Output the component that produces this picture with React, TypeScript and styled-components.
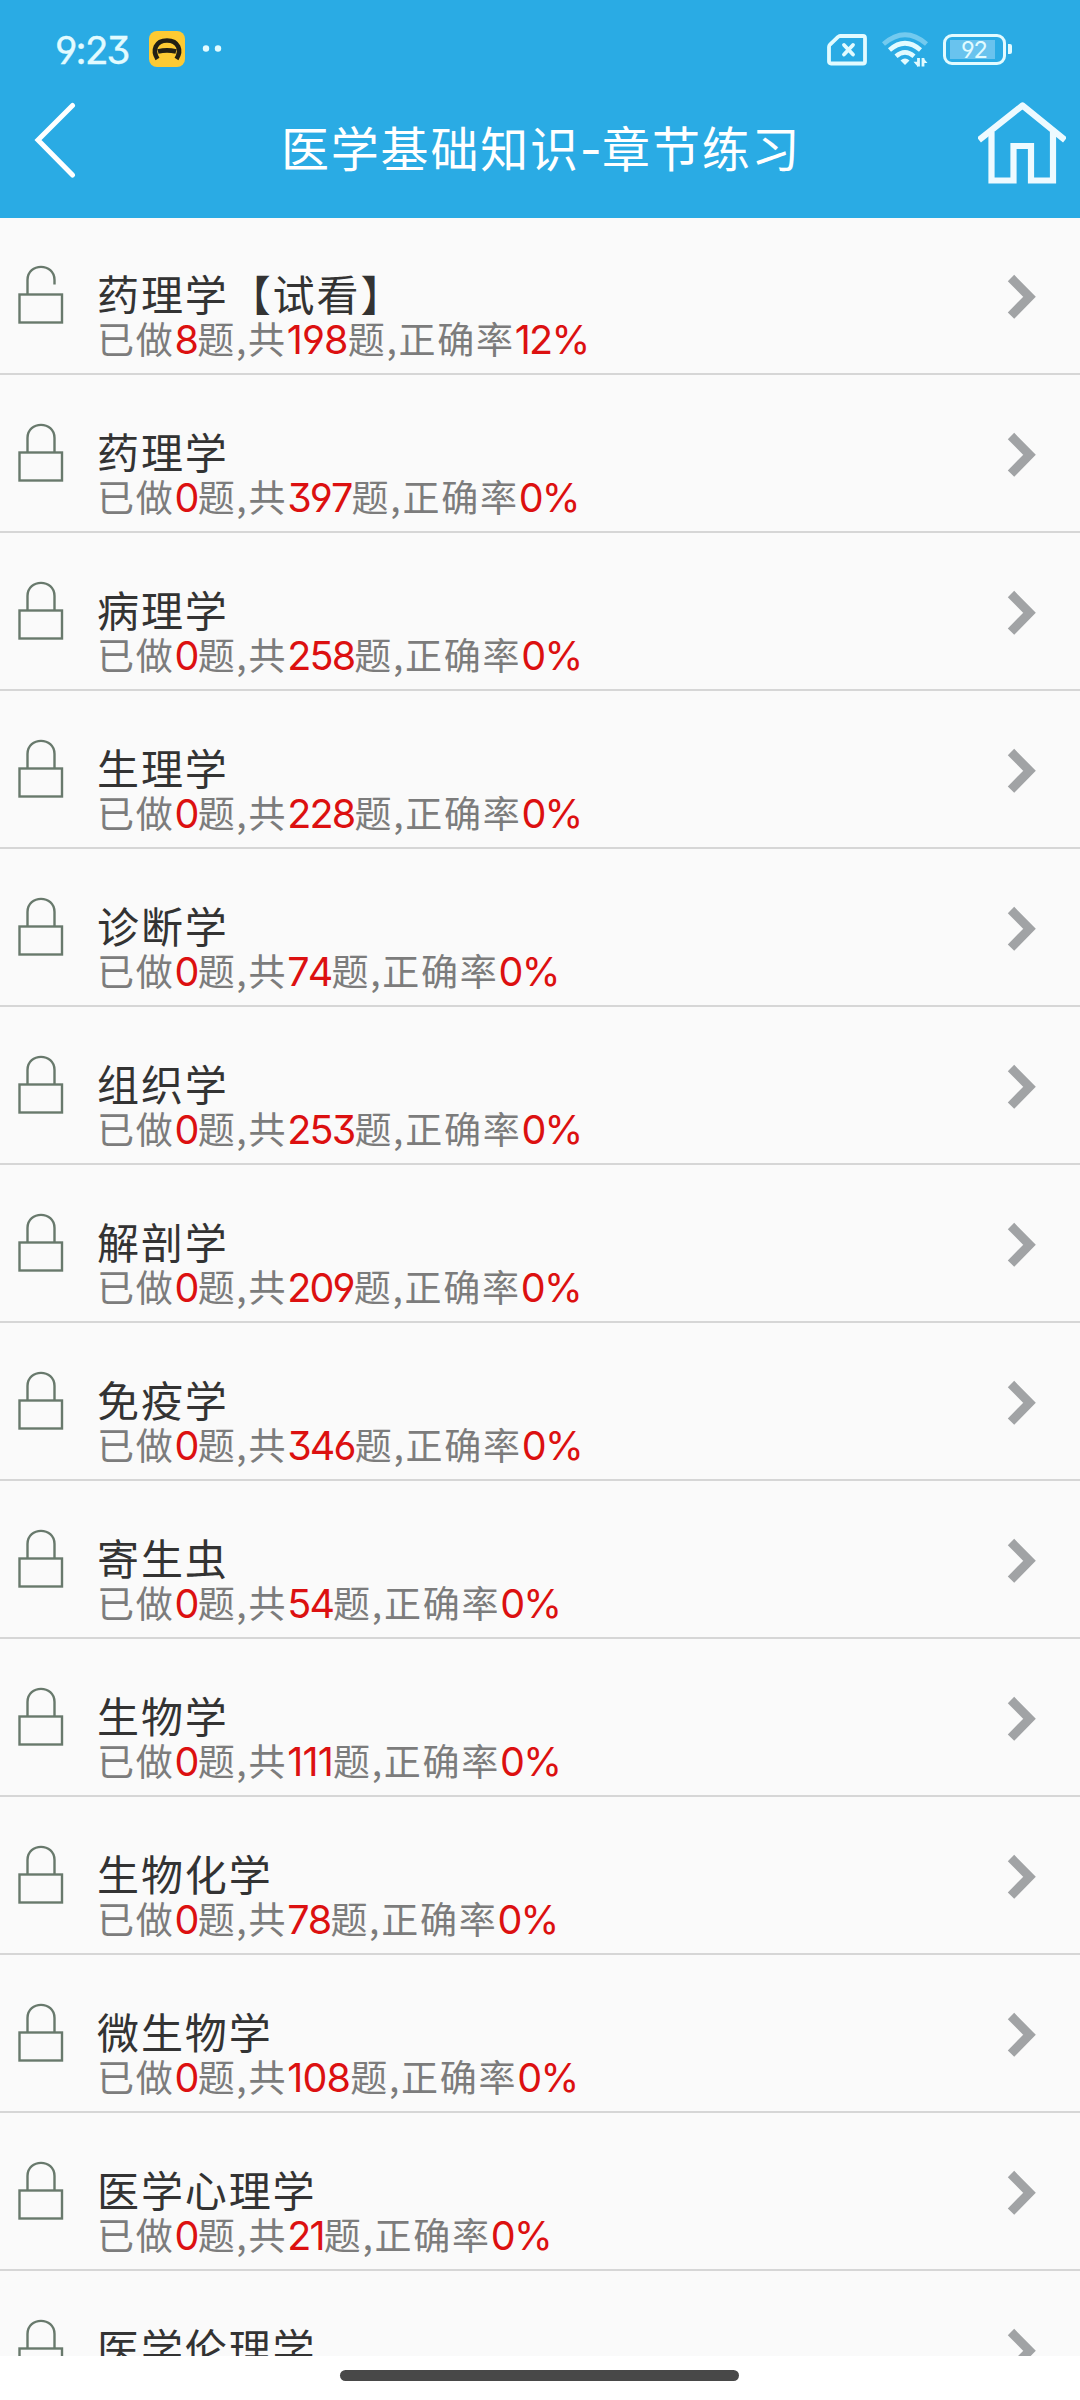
import React from "react";
import styled, { createGlobalStyle } from "styled-components";

const cjk = `"Noto Sans CJK SC", sans-serif`;

const GlobalStyle = createGlobalStyle`
  * { box-sizing: border-box; }
  body { margin: 0; background: #fff; font-family: ${cjk}; }
  svg { display: block; flex: none; }
`;

const Screen = styled.div`
  width: 1080px;
  height: 2400px;
  display: flex;
  flex-direction: column;
  overflow: hidden;
  background: #fff;
`;

const Header = styled.header`
  height: 218px;
  flex: none;
  background: #2aabe4;
  color: #fff;
`;

const StatusBar = styled.div`
  height: 100px;
  padding: 0 74px 0 55px;
  display: flex;
  align-items: center;
  color: #e2fbff;
`;

const Clock = styled.span`
  width: 94px;
  font: 400 38.5px/58px Inter, sans-serif;
  font-feature-settings: "cv09", "cv04";
  letter-spacing: -1.8px;
  -webkit-text-stroke: 0.4px currentColor;
  white-space: nowrap;
`;

const Spacer = styled.div`
  flex: 1;
`;

const Nav = styled.nav`
  height: 118px;
  display: flex;
  align-items: flex-start;
  padding: 0 14px 0 34px;
`;

const NavTitle = styled.h1`
  flex: 1;
  margin: 15.5px 0 0 0;
  padding-left: 159px;
  font: 400 48px/60px ${cjk};
  letter-spacing: 1.8px;
  white-space: nowrap;
`;

const Dash = styled.span`
  font-family: Inter, sans-serif;
  letter-spacing: 0.2px;
`;

const NavButton = styled.button<{ $top: number }>`
  width: 88px;
  margin: ${(p) => p.$top}px 0 0;
  padding: 0;
  border: 0;
  background: none;
  color: #fff;
`;

const List = styled.ul`
  flex: none;
  height: 2138px;
  margin: 0;
  padding: 0;
  list-style: none;
  overflow: hidden;
  background: #fafafa;
`;

const Row = styled.li`
  height: 158px;
  padding: 47px 43px 0 18px;
  display: flex;
  align-items: flex-start;
  border-bottom: 2px solid #d6d6d6;

  &:first-child {
    height: 157px;
    padding-top: 46px;
  }
`;

const RowText = styled.div`
  flex: 1;
  margin-left: 33px;
  padding-top: 2px;
  white-space: nowrap;
`;

const RowTitle = styled.div`
  font: 400 42px/52px ${cjk};
  letter-spacing: 1.9px;
  padding-top: 1px;
  height: 52px;
  color: #333;
`;

const RowStats = styled.div`
  height: 40px;
  font: 400 37px/40px ${cjk};
  letter-spacing: 1.75px;
  color: #7c7c7c;
`;

const Num = styled.span<{ $narrow?: boolean }>`
  font: 400 39.5px/40px Inter, sans-serif;
  font-feature-settings: "cv09", "cv04", "cv03";
  font-kerning: none;
  letter-spacing: ${(p) => (p.$narrow ? -0.8 : -1.8)}px;
  color: #dc1010;
`;

const GestureArea = styled.footer`
  flex: 1;
  display: flex;
  justify-content: center;
  align-items: flex-start;
  padding: 14px 1px 0 0;
`;

const GestureBar = styled.div`
  width: 399px;
  height: 11px;
  border-radius: 6px;
  background: #484848;
`;

const AppBadge = () => (
  <svg width="36" height="36" viewBox="0 0 36 36">
    <rect width="36" height="36" rx="8" fill="#fdca33" />
    <path
      d="M8.500 28C3 19.500 6.500 9.500 18 9.500S33 19.500 27.500 28M9 20.500Q18 18.300 27 20.500"
      fill="none"
      stroke="#221f14"
      strokeWidth="4.600"
    />
  </svg>
);

const Dots = () => (
  <svg width="20" height="8" viewBox="0 0 20 8" fill="#e2fbff">
    <circle cx="4" cy="3.5" r="3.2" />
    <circle cx="16" cy="3.5" r="3.2" />
  </svg>
);

const SimIcon = () => (
  <svg width="40" height="32" viewBox="0 0 40 32" fill="none" stroke="currentColor">
    <path d="M13 2H36Q38 2 38 4V27.500Q38 29.500 36 29.500H4Q2 29.500 2 27.500V13Q2 11.500 3 10.500L11 3Q12 2 13 2Z" strokeWidth="3.800" />
    <path d="M17 11L26 20.500M26 11L17 20.500" strokeWidth="3.800" strokeLinecap="round" />
  </svg>
);

const WifiIcon = () => (
  <svg width="46" height="36" viewBox="0 0 46 36" fill="none" stroke="currentColor" strokeWidth="4.600">
    <path d="M1.500 12Q23 -6.500 44.500 12" opacity="0.400" />
    <path d="M7.500 18Q23 4.500 38.500 18" />
    <path d="M14 24.300Q23 16.500 32 24.300" />
    <path d="M18.500 28.500Q23 24.500 27.500 28.500L23 33Z" fill="currentColor" stroke="none" />
    <path d="M36.500 26V34.500M41 34.500V26" strokeWidth="2.800" />
    <path d="M31.500 29.800L36 35V29.800ZM45.500 31L41 25.800V31Z" fill="currentColor" stroke="none" />
  </svg>
);

const Battery = styled.div`
  position: relative;
  width: 63px;
  height: 31px;
  margin-bottom: 2px;
  border: 3px solid #e2fbff;
  border-radius: 9px;
  padding: 3px 4px;

  &::after {
    content: "";
    position: absolute;
    left: 62px;
    top: 7px;
    width: 4px;
    height: 10px;
    border-radius: 0 2px 2px 0;
    background: #e2fbff;
  }
`;

const BatteryLevel = styled.div`
  width: 45px;
  height: 19px;
  background: #69c3ee;
  font: 400 23.5px/20px Inter, sans-serif;
  font-feature-settings: "cv04";
  letter-spacing: -1.2px;
  text-indent: 11px;
`;

const StatusIcons = styled.div`
  display: flex;
  align-items: center;
  gap: 15px;
  height: 36px;
`;

const BadgeGroup = styled.div`
  display: flex;
  align-items: center;
  gap: 17px;
  padding-bottom: 2px;
`;

const BackIcon = () => (
  <svg width="42" height="78" viewBox="0 0 42 78" fill="none" stroke="currentColor" strokeWidth="5">
    <path d="M38.500 4.500L4 39L38.500 74" strokeLinecap="round" />
  </svg>
);

const HomeIcon = () => (
  <svg width="88" height="86" viewBox="0 0 88 86" fill="none" stroke="#eefaff" strokeWidth="6.200">
    <path d="M1 40L44.500 5.500L87 40" strokeLinejoin="round" />
    <path d="M13.500 32V80.500H35.500V46H53V80.500H75V32" />
  </svg>
);

const LockIcon = ({ open }: { open?: boolean }) => (
  <svg width="46" height="60" viewBox="0 0 46 60" fill="none" stroke="#68796c" strokeWidth="2.400">
    <rect x="1.500" y="30.500" width="42.500" height="28" />
    <path
      d={
        open
          ? "M9.500 30V16C9.500 -1.500 36.500 -1.500 36.500 16V20.500"
          : "M9.500 30V16C9.500 -1.500 36.500 -1.500 36.500 16V30"
      }
    />
  </svg>
);

const ArrowIcon = () => (
  <svg width="30" height="46" viewBox="0 0 30 46" fill="none" stroke="#a1a3a5" strokeWidth="9">
    <path d="M4 4L22.500 22.800L4 41.600" />
  </svg>
);

const ArrowSlot = styled.div`
  margin-top: 10px;
`;

interface Chapter {
  title: string;
  stats?: [done: number, total: number, rate: number];
  open?: boolean;
}

const chapters: Chapter[] = [
  { title: "药理学【试看】", stats: [8, 198, 12], open: true },
  { title: "药理学", stats: [0, 397, 0] },
  { title: "病理学", stats: [0, 258, 0] },
  { title: "生理学", stats: [0, 228, 0] },
  { title: "诊断学", stats: [0, 74, 0] },
  { title: "组织学", stats: [0, 253, 0] },
  { title: "解剖学", stats: [0, 209, 0] },
  { title: "免疫学", stats: [0, 346, 0] },
  { title: "寄生虫", stats: [0, 54, 0] },
  { title: "生物学", stats: [0, 111, 0] },
  { title: "生物化学", stats: [0, 78, 0] },
  { title: "微生物学", stats: [0, 108, 0] },
  { title: "医学心理学", stats: [0, 21, 0] },
  { title: "医学伦理学" },
];

// Totals that start with the slim "1" need looser tracking.
const startsSlim = (n: number) => String(n).startsWith("1");

export default function App() {
  return (
    <Screen>
      <GlobalStyle />
      <Header>
        <StatusBar>
          <Clock>9:23</Clock>
          <BadgeGroup>
            <AppBadge />
            <Dots />
          </BadgeGroup>
          <Spacer />
          <StatusIcons>
            <SimIcon />
            <WifiIcon />
            <Battery>
              <BatteryLevel>92</BatteryLevel>
            </Battery>
          </StatusIcons>
        </StatusBar>
        <Nav>
          <NavButton $top={1} aria-label="返回">
            <BackIcon />
          </NavButton>
          <NavTitle>
            医学基础知识<Dash>-</Dash>章节练习
          </NavTitle>
          <NavButton $top={0} aria-label="首页">
            <HomeIcon />
          </NavButton>
        </Nav>
      </Header>
      <List>
        {chapters.map((c, i) => (
          <Row key={i}>
            <LockIcon open={c.open} />
            <RowText>
              <RowTitle>{c.title}</RowTitle>
              {c.stats && (
                <RowStats>
                  已做<Num>{c.stats[0]}</Num>题,共
                  <Num $narrow={startsSlim(c.stats[1])}>{c.stats[1]}</Num>题,正确率
                  <Num>{c.stats[2]}%</Num>
                </RowStats>
              )}
            </RowText>
            <ArrowSlot>
              <ArrowIcon />
            </ArrowSlot>
          </Row>
        ))}
      </List>
      <GestureArea>
        <GestureBar />
      </GestureArea>
    </Screen>
  );
}
